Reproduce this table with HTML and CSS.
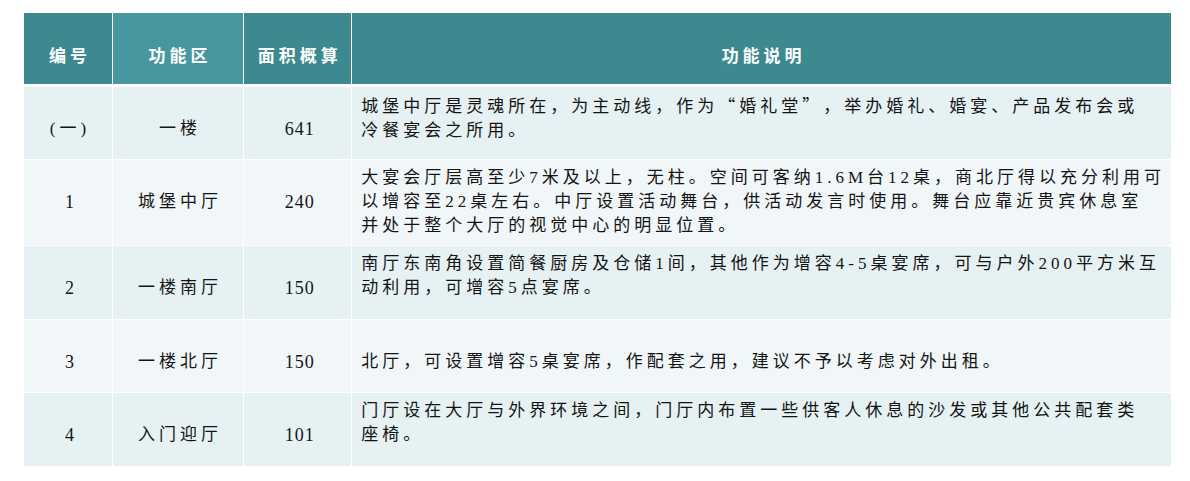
FILE: index.html
```html
<!DOCTYPE html>
<html lang="zh-CN">
<head>
<meta charset="utf-8">
<title>功能区说明</title>
<link rel="stylesheet" href="styles.css">
</head>
<body>
<div class="wrap">
  <table class="grid">
    <colgroup>
      <col class="c-no">
      <col class="c-zone">
      <col class="c-area">
      <col class="c-desc">
    </colgroup>
    <thead>
      <tr class="head">
        <th class="h-dark">编号</th>
        <th class="h-light">功能区</th>
        <th class="h-dark">面积概算</th>
        <th class="h-dark">功能说明</th>
      </tr>
    </thead>
    <tbody>
      <tr class="row odd r72">
        <td class="mid">(一)</td>
        <td class="mid">一楼</td>
        <td class="mid num">641</td>
        <td class="desc">城堡中厅是灵魂所在，为主动线，作为<span class="cj">“</span>婚礼堂<span class="cj">”</span>，举办婚礼、婚宴、产品发布会或<br>冷餐宴会之所用。</td>
      </tr>
      <tr class="row even r85">
        <td class="mid num">1</td>
        <td class="mid">城堡中厅</td>
        <td class="mid num">240</td>
        <td class="desc">大宴会厅层高至少7米及以上，无柱。空间可客纳1.6M台12桌，商北厅得以充分利用可<br>以增容至22桌左右。中厅设置活动舞台，供活动发言时使用。舞台应靠近贵宾休息室<br>并处于整个大厅的视觉中心的明显位置。</td>
      </tr>
      <tr class="row odd r73">
        <td class="mid num">2</td>
        <td class="mid">一楼南厅</td>
        <td class="mid num">150</td>
        <td class="desc">南厅东南角设置简餐厨房及仓储1间，其他作为增容4-5桌宴席，可与户外200平方米互<br>动利用，可增容5点宴席。</td>
      </tr>
      <tr class="row even r72">
        <td class="mid num">3</td>
        <td class="mid">一楼北厅</td>
        <td class="mid num">150</td>
        <td class="desc"><br>北厅，可设置增容5桌宴席，作配套之用，建议不予以考虑对外出租。</td>
      </tr>
      <tr class="row odd r73">
        <td class="mid num">4</td>
        <td class="mid">入门迎厅</td>
        <td class="mid num">101</td>
        <td class="desc">门厅设在大厅与外界环境之间，门厅内布置一些供客人休息的沙发或其他公共配套类<br>座椅。</td>
      </tr>
    </tbody>
  </table>
</div>
</body>
</html>
```

FILE: styles.css
```css
html, body {
  margin: 0;
  padding: 0;
  background: #ffffff;
}

.wrap {
  padding: 12px 0 0 23px;
}

.grid {
  border-collapse: separate;
  border-spacing: 1px;
  table-layout: fixed;
  width: 1149px;
  font-family: "Liberation Serif", "Noto Sans CJK SC", serif;
  font-size: 17px;
  line-height: 24px;
  color: #141414;
  letter-spacing: 4px;
  text-spacing-trim: space-all;
}

.c-no { width: 88px; }
.c-zone { width: 130px; }
.c-area { width: 107px; }
.c-desc { width: 818px; }

.head {
  height: 73px;
}

.head th {
  vertical-align: top;
  padding: 30px 0 0 4px;
  color: #ffffff;
  font-family: "Noto Sans CJK SC", sans-serif;
  font-size: 17px;
  font-weight: 700;
  letter-spacing: 4px;
  text-align: center;
  border-bottom: 2px solid #ffffff;
}

.h-dark { background: #3c8a8f; }
.h-light { background: #4797a0; }

.r72 { height: 72px; }
.r73 { height: 73px; }
.r85 { height: 85px; }

.odd td { background: #e6f1f3; }
.even td { background: #f1f7f9; }

.row td {
  vertical-align: top;
  padding: 0;
}

.mid {
  text-align: center;
  padding-top: 30px !important;
  padding-left: 4px !important;
}

.num {
  font-size: 18px;
  letter-spacing: 1px;
}

.desc {
  padding: 6px 12px 0 9px !important;
  white-space: nowrap;
  text-align: left;
}

.cj {
  font-family: "Noto Sans CJK SC", sans-serif;
}
```
